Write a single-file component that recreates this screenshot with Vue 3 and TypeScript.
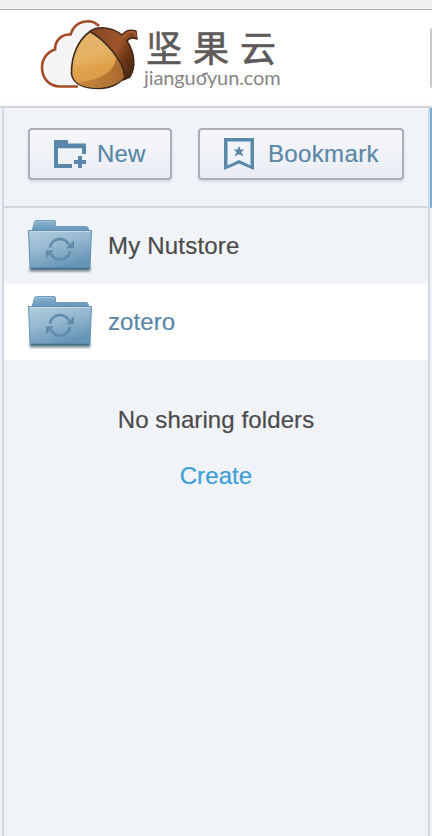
<script setup lang="ts">
import { ref } from 'vue'

interface Folder {
  name: string
  selected: boolean
}

const folders = ref<Folder[]>([
  { name: 'My Nutstore', selected: false },
  { name: 'zotero', selected: true },
])
</script>

<template>
  <div class="page">
    <div class="chrome"></div>
    <header class="header">
      <svg class="nut" width="100" height="72" viewBox="0 0 100 72">
        <defs>
          <linearGradient id="nut-body" x1="0.3" y1="0" x2="0.55" y2="1">
            <stop offset="0" stop-color="#e5b468" />
            <stop offset="0.4" stop-color="#e5b366" />
            <stop offset="0.65" stop-color="#e0a048" />
            <stop offset="1" stop-color="#d39a4c" />
          </linearGradient>
          <linearGradient id="nut-cap" x1="0.1" y1="0.1" x2="1" y2="0.7">
            <stop offset="0" stop-color="#8a4a25" />
            <stop offset="0.5" stop-color="#9d5529" />
            <stop offset="0.75" stop-color="#6b3617" />
            <stop offset="1" stop-color="#4f2812" />
          </linearGradient>
          <linearGradient id="nut-shade" x1="0" y1="0" x2="1" y2="0">
            <stop offset="0" stop-color="#c98b40" />
            <stop offset="1" stop-color="#a3632b" />
          </linearGradient>
        </defs>
        <path d="M39 67.500H18C9 66 3 58.500 3 48.500C3 40 8 33 16 30.500C16 21 23 15 31.500 15.500C36 1 52 -1 60 7L60 50Z" fill="#f5f5f6" />
        <path d="M39 67.500H20C9 66.500 3 58.500 3 48.500C3 40 8 33 16 30.500C16 21 23 15 31.500 15.500C36 1 52 -1 60 7" fill="none" stroke="#a64b26" stroke-width="2.600" />
        <path d="M51 12C61 6 75 9 83 16C86 12 91 10 97 12L98 20C93 18 90 19 88 22C96 34 97 48 91 58L84 61Z" fill="url(#nut-cap)" stroke="#3f2418" stroke-width="1.400" stroke-linejoin="round" />
        <path d="M51 12.500C40 20 32 36 32.500 55C34 66 47 69.500 60 69.500C73 69 83 63 85.500 58C85 42 66 21 51 12.500Z" fill="url(#nut-body)" stroke="#3b2a1c" stroke-width="1.600" stroke-linejoin="round" />
        <path d="M77 38.500C76 52 62 62 37 63C44 68 52 69 60 68.700C72 68 82 63 84.500 57.500C84 51 81 44 77 38.500Z" fill="url(#nut-shade)" opacity="0.9" />
        <path d="M84.500 18C88 13 92 12 96 13.500L97 18" fill="none" stroke="#a55b31" stroke-width="2" />
      </svg>
      <div class="wordmark">
        <div class="brand">坚果云</div>
        <div class="domain">jiangu<span class="sprout">o</span>yun.com</div>
      </div>
      <div class="search-edge"></div>
    </header>
    <div class="main">
      <aside class="sidebar">
        <div class="toolbar">
          <button class="btn new">
            <svg width="34" height="30" viewBox="0 0 34 30">
              <path fill="#5b87a8" d="M0 1H14V4.500H32V15H28V9.300H4V25H18V29H0Z" />
              <path d="M26 17V29M20 23H32" stroke="#5b87a8" stroke-width="4" />
            </svg>
            <span>New</span>
          </button>
          <button class="btn bookmark">
            <svg width="30" height="32" viewBox="0 0 30 32">
              <path d="M0 0H30V32L15 25.500L0 32ZM3.500 3.500V27.500L15 22L26.500 27.500V3.500Z" fill="#5b87a8" fill-rule="evenodd" />
              <path d="M15 8L16.500 11.500H20.300L17.500 14L19.500 18.500L15 16.200L10.500 18.500L12.500 14L9.700 11.500H13.500Z" fill="#5b87a8" />
            </svg>
            <span>Bookmark</span>
          </button>
        </div>
        <ul class="list">
          <li v-for="f in folders" :key="f.name" class="row" :class="{ selected: f.selected }">
            <svg class="folder" width="66" height="56" viewBox="0 0 66 56">
              <defs>
                <linearGradient id="folder-face" x1="0" y1="0" x2="0.45" y2="1">
                  <stop offset="0" stop-color="#b5cee0" />
                  <stop offset="0.5" stop-color="#94b7cf" />
                  <stop offset="1" stop-color="#6595b6" />
                </linearGradient>
                <linearGradient id="folder-back" x1="0" y1="0" x2="0" y2="1">
                  <stop offset="0" stop-color="#8bb4d0" />
                  <stop offset="1" stop-color="#5f91b4" />
                </linearGradient>
                <filter id="soft" x="-10%" y="-100%" width="120%" height="300%"><feGaussianBlur stdDeviation="1.200" /></filter>
              </defs>
              <rect x="2.500" y="48" width="61" height="4.500" rx="1" fill="#46515b" opacity="0.7" filter="url(#soft)" />
              <path d="M5 12L7.500 3Q8 1.500 9.500 1.500H27Q28.500 1.500 28.500 3V7.500H59Q61 7.500 61 9L62 13H5Z" fill="url(#folder-back)" stroke="#6e9cba" />
              <path d="M8.500 6Q8.500 2.500 10.500 2.500H27" fill="none" stroke="#a3c5da" />
              <path d="M1.500 11.500H64.500L63 48.500Q63 50 61 50H5Q3 50 3 48.500Z" fill="url(#folder-face)" stroke="#6292b2" />
              <path d="M2.500 12.500H63.500" stroke="#c4d8e5" />
              <path d="M4 49.500H62" stroke="#426b88" stroke-width="1.300" />
              <g fill="none" stroke="#5f8cac" stroke-width="2.800">
                <path d="M22.900 28.500A10.200 10.200 0 0 1 42.200 26" />
                <path d="M43.100 32.100A10.200 10.200 0 0 1 23.800 34.600" />
              </g>
              <path d="M47 21V29.300H39.300ZM19 39.600V31.300H26.700Z" fill="#5f8cac" />
            </svg>
            <span>{{ f.name }}</span>
          </li>
        </ul>
        <div class="empty">
          <div>No sharing folders</div>
          <a class="create">Create</a>
        </div>
      </aside>
      <div class="content-edge"><div class="content-bar"></div></div>
    </div>
  </div>
</template>

<style>
body {
  overflow: hidden;
}
</style>

<style scoped>
.page {
  display: flex;
  flex-direction: column;
  height: 836px;
  background: #f0f3f8;
  font-family: "Liberation Sans", "Noto Sans CJK SC", sans-serif;
  font-size: 24px;
  letter-spacing: 0.1px;
  -webkit-text-stroke: 0.2px currentColor;
  color: #4b4b4b;
}
.chrome {
  box-sizing: border-box;
  height: 10px;
  background: #f0f0f0;
  border-bottom: 1px solid #b0b0b0;
}
.header {
  box-sizing: border-box;
  height: 98px;
  display: flex;
  background: linear-gradient(#fff 88%, #fbfbfb);
  border-bottom: 2px solid #d2d4d6;
  padding: 9px 0 0 39px;
}
.nut {
  flex: none;
}
.wordmark {
  margin-left: 5px;
  padding-top: 12px;
  width: 150px;
}
.brand {
  height: 34px;
  line-height: 38px;
  margin-left: 2px;
  font-family: "Liberation Sans", "Noto Sans CJK SC", sans-serif;
  font-size: 36px;
  letter-spacing: 11px;
  -webkit-text-stroke: 0.6px currentColor;
  color: #5e5b5a;
  white-space: nowrap;
}
.domain {
  line-height: 24px;
  font-family: Lato, sans-serif;
  font-size: 20px;
  letter-spacing: -0.1px;
  -webkit-text-stroke: 0;
  color: #858585;
  white-space: nowrap;
}
.sprout {
  position: relative;
}
.sprout::after {
  content: "";
  position: absolute;
  right: -1px;
  top: 8px;
  width: 6px;
  height: 2px;
  background: #858585;
  transform: rotate(-15deg);
}
.search-edge {
  margin: 9px 0 0 auto;
  width: 2px;
  height: 60px;
  background: #c9c9c9;
  border-radius: 2px 0 0 2px;
}
.main {
  display: flex;
  flex: 1;
}
.sidebar {
  box-sizing: border-box;
  width: 428px;
  margin-left: 2px;
  border-left: 2px solid #cfd9e2;
  border-right: 2px solid #cfd9e2;
}
.toolbar {
  box-sizing: border-box;
  height: 100px;
  padding: 20px 24px 0;
  display: flex;
  justify-content: space-between;
  border-bottom: 2px solid #cfd9e2;
}
.btn {
  box-sizing: border-box;
  height: 52px;
  display: flex;
  align-items: center;
  padding: 0 0 0 24px;
  border: 2px solid #abafb5;
  border-radius: 4px;
  background: linear-gradient(#f6f7fa, #e9edf3);
  box-shadow: 0 2px 3px rgba(0, 0, 0, 0.1);
  color: #5b87a8;
  font: inherit;
  letter-spacing: 0.1px;
  -webkit-text-stroke: 0.2px currentColor;
}
.new {
  width: 144px;
}
.new span {
  margin-left: 9px;
}
.bookmark {
  width: 206px;
}
.bookmark span {
  margin-left: 14px;
  letter-spacing: 0.35px;
}
.list {
  list-style: none;
  margin: 0;
  padding: 0;
}
.row {
  box-sizing: border-box;
  height: 76px;
  display: flex;
  align-items: center;
  padding-left: 23px;
  letter-spacing: 0.2px;
}
.row span {
  margin-left: 15px;
}
.selected {
  background: #fff;
  color: #5b87a8;
  letter-spacing: 0.1px;
}
.folder {
  margin-top: 2px;
}
.empty {
  padding-top: 46px;
  text-align: center;
  line-height: 28px;
}
.create {
  display: block;
  margin-top: 28px;
  color: #3d9fd5;
}
.content-edge {
  width: 2px;
  background: #f2f2f2;
}
.content-bar {
  height: 100px;
  background: #79afd5;
}
</style>
